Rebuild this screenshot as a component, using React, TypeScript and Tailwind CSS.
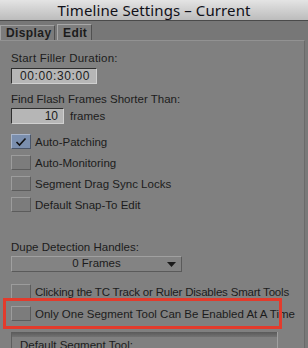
import React from "react";

const Check = ({ checked }: { checked?: boolean }) => (
  <div
    className={
      "w-[20px] h-[15px] shrink-0 border-t border-l border-r border-b flex items-center justify-center " +
      (checked
        ? "bg-[#7b8fae] border-t-[#a9b6cc] border-l-[#a9b6cc] border-r-[#4a5568] border-b-[#4a5568]"
        : "bg-[#7c7c7c] border-t-[#9c9c9c] border-l-[#9c9c9c] border-r-[#5c5c5c] border-b-[#5c5c5c]")
    }
  >
    {checked && (
      <svg width="12" height="10" viewBox="0 0 12 10">
        <path d="M1.5 5 L4.5 8 L10.5 1.5" fill="none" stroke="#111" strokeWidth="1.6" />
      </svg>
    )}
  </div>
);

const Row = ({ checked, label, tight }: { checked?: boolean; label: string; tight?: boolean }) => (
  <div className="flex items-center h-[15px] gap-[4px]">
    <Check checked={checked} />
    <span className={"whitespace-nowrap leading-[14px] " + (tight ? "tracking-[-0.2px]" : "")}>{label}</span>
  </div>
);

export default function App() {
  return (
    <div
      className="w-[308px] h-[348px] overflow-hidden bg-[#797979] flex flex-col text-[#1c1c1c]"
      style={{ fontFamily: '"Liberation Sans", Arial, sans-serif' }}
    >
      <div
        className="h-[21px] shrink-0 bg-gradient-to-b from-[#e4e4e4] to-[#bcbcbc] border-b border-[#4a4a4a] flex items-center justify-center text-[15px] text-[#101018]"
        style={{ fontFamily: '"Noto Sans", "DejaVu Sans", sans-serif' }}
      >
        <span className="tracking-[0.1px]">Timeline Settings – Current</span>
      </div>
      <div className="flex items-end h-[19px] shrink-0 bg-[#777777]">
        <div className="h-[15px] w-[55px] bg-[#7c7c7c] border-t border-l border-r border-t-[#a2a2a2] border-l-[#a2a2a2] border-r-[#505050] flex items-center pl-[5px] text-[12px] font-bold tracking-[0.4px] leading-none">
          Display
        </div>
        <div className="w-[2px]" />
        <div className="h-[16px] w-[35px] bg-[#7f7f7f] border-t border-l border-r border-t-[#a8a8a8] border-l-[#a8a8a8] border-r-[#505050] flex items-center pl-[5px] text-[12px] font-bold tracking-[0.4px] leading-none">
          Edit
        </div>
      </div>
      <div className="w-[305px] flex-1 bg-[#808080] border-t border-r border-t-[#929292] border-r-[#6a6a6a] pl-[11px] pt-[10px] text-[11.5px] flex flex-col">
        <div className="leading-[14px] h-[14px] tracking-[0.2px]">Start Filler Duration:</div>
        <div className="mt-[3px] w-[86px] h-[16px] bg-[#b6b6b6] border border-t-[#2e2e2e] border-l-[#2e2e2e] border-r-[#d0d0d0] border-b-[#d0d0d0] flex items-center justify-end pr-[6px] text-[12px] tracking-[0.6px] leading-none">
          00:00:30:00
        </div>
        <div className="mt-[8px] leading-[14px] h-[14px]">Find Flash Frames Shorter Than:</div>
        <div className="mt-[2px] flex items-center gap-[6px]">
          <div className="w-[53px] h-[16px] bg-[#b6b6b6] border border-t-[#2e2e2e] border-l-[#2e2e2e] border-r-[#d0d0d0] border-b-[#d0d0d0] flex items-center justify-end pr-[5px] text-[12px] leading-none">
            10
          </div>
          <span className="leading-[14px]">frames</span>
        </div>
        <div className="mt-[10px] flex flex-col gap-[6px]">
          <Row checked label="Auto-Patching" />
          <Row label="Auto-Monitoring" />
          <Row label="Segment Drag Sync Locks" />
          <Row label="Default Snap-To Edit" />
        </div>
        <div className="mt-[28px] leading-[14px] h-[14px]">Dupe Detection Handles:</div>
        <div className="mt-[2px] w-[171px] h-[16px] bg-[#838383] border border-t-[#a0a0a0] border-l-[#a0a0a0] border-r-[#5a5a5a] border-b-[#5a5a5a] relative flex items-center justify-center leading-none">
          0 Frames
          <svg className="absolute right-[5px] top-[5px]" width="9" height="5" viewBox="0 0 9 5">
            <path d="M0 0 H9 L4.5 5 Z" fill="#1a1a1a" />
          </svg>
        </div>
        <div className="mt-[12px]">
          <Row tight label="Clicking the TC Track or Ruler Disables Smart Tools" />
        </div>
        <div className="mt-[7px] relative">
          <Row label="Only One Segment Tool Can Be Enabled At A Time" />
          <div className="absolute left-[-8px] top-[-8px] w-[279px] h-[31px] border-[3px] border-[#e33b2c]" />
        </div>
        <div className="mt-[11px] w-[267px] flex-1 border-l border-r border-l-[#5e5e5e] border-r-[#a0a0a0] bg-[#808080] flex flex-col">
          <div className="h-[5px] bg-gradient-to-b from-[#5a5a5a] to-[#727272]" />
          <div className="pl-[8px] pt-[1px] leading-[14px]">Default Segment Tool:</div>
        </div>
      </div>
    </div>
  );
}
